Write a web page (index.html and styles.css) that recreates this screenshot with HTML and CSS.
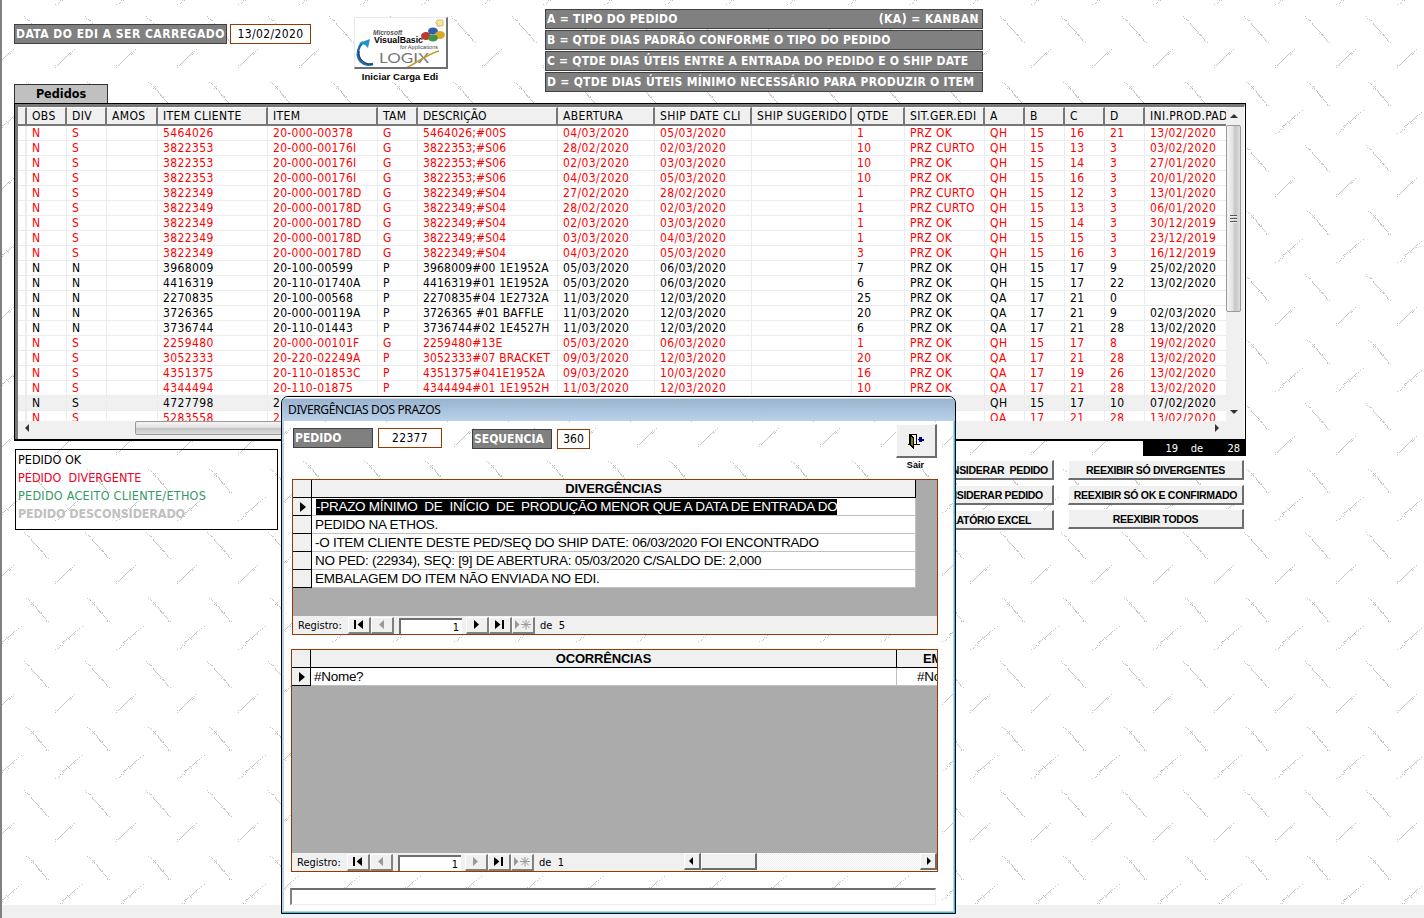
FILE: index.html
```html
<!DOCTYPE html>
<html lang="pt-BR">
<head>
<meta charset="utf-8">
<title>Pedidos EDI</title>
<link rel="stylesheet" href="styles.css">
</head>
<body>
<svg class="texture" aria-hidden="true">
  <defs>
    <path id="back-a" d="M26 .5h1M28 1.5h1M29 2.5h1M31 4.5h1M33 4.5h1M32 5.5h1M33 6.5h1M31 6.5h1M33 7.5h1M35 8.5h1M36 9.5h1M36 10.5h1M37 11.5h1M38 12.5h1M38 13.5h2M39 14.5h1M41 14.5h1M40 15.5h2M42 17.5h1M43 18.5h1M44 19.5h1M45 20.5h1M46 22.5h1M46 23.5h1M48 23.5h1"/>
    <path id="back-b" d="M24 .5h1M25 2.5h1M27 3.5h1M28 4.5h2M31 7.5h1M31 8.5h1M32 9.5h1M33 10.5h1M34 11.5h1M35 12.5h1M36 13.5h1M37 14.5h1M38 15.5h1M39 16.5h1M38 17.5h1M40 18.5h2M41 19.5h2M43 21.5h1M44 22.5h1M45 23.5h1M45 24.5h1M46 25.5h1M48 26.5h1"/>
    <path id="fwd-a" d="M82 .5h1M79 2.5h1M77 4.5h1M75 5.5h1M74 6.5h1M73 7.5h1M74 8.5h1M72 8.5h1M71 9.5h1M70 10.5h1M69 11.5h1M68 12.5h1M67 11.5h1M69 13.5h1M66 13.5h1M65 14.5h1M63 15.5h2M62 16.5h1M63 17.5h1M60 19.5h1M62 19.5h1M59 21.5h1M58 22.5h1M55 23.5h1"/>
    <path id="fwd-b" d="M74 .5h1M72 2.5h1M70 3.5h1M69 4.5h1M71 4.5h1M68 5.5h1M70 5.5h1M67 6.5h1M66 7.5h1M65 8.5h1M64 9.5h1M63 10.5h1M62 11.5h1M61 12.5h1M60 13.5h1M59 14.5h1M58 15.5h1M57 16.5h1M55 16.5h1M55 18.5h1"/>
    <g id="tread" class="dots">
      <use href="#back-a" y="82"/><use href="#back-b" y="16"/>
      <use href="#fwd-a" y="110"/><use href="#fwd-a" x="-61" y="110"/>
      <use href="#fwd-a" y="-19"/><use href="#fwd-a" x="-61" y="-19"/>
      <use href="#fwd-b" y="49"/><use href="#fwd-b" x="-61" y="49"/>
    </g>
    <pattern id="plate" width="61" height="129" patternUnits="userSpaceOnUse"><use href="#tread"/></pattern>
    <pattern id="plate-dialog" x="54" y="-42" width="61" height="129" patternUnits="userSpaceOnUse"><use href="#tread"/></pattern>
  </defs>
  <rect width="100%" height="100%" fill="url(#plate)"/>
</svg>
<main class="page">
  <header class="top">
    <div class="edi">
      <span class="tag t1">DATA DO EDI A SER CARREGADO</span><span class="field f1">13/02/2020</span>
    </div>
    <div class="load">
      <button class="logo">
        <svg width="92" height="52" viewBox="0 0 92 52">
          <path d="M18 46C3 50-2 34 8 24" fill="none" stroke="#1b6fae" stroke-width="2.500"/>
          <path d="M4 25l11-4-2 9-3-3z" fill="#2591d0"/>
          <path d="M18 46C7 47 3 39 4 33" fill="none" stroke="#24457c" stroke-width="1.500"/>
          <ellipse cx="71" cy="18" rx="5" ry="4" fill="#bd3b30"/>
          <ellipse cx="78" cy="13" rx="5" ry="3.500" fill="#2d5fae"/>
          <ellipse cx="85" cy="17" rx="5" ry="4" fill="#d9a928"/>
          <ellipse cx="78" cy="20" rx="5" ry="3.500" fill="#409347"/>
          <path d="M82 2h6v6h-6zM80 4l5 5" fill="#f5e6a4" stroke="#d8c070"/>
          <text x="18" y="17" class="ms">Microsoft</text>
          <text x="19" y="25" class="vb" textLength="49" lengthAdjust="spacingAndGlyphs">VisualBasic</text>
          <text x="45" y="31" class="fa" textLength="38">for Applications</text>
          <text x="24" y="45" class="lx" textLength="50" lengthAdjust="spacingAndGlyphs">LOGIX</text>
          <path d="M84 33C73 36 63 44 51 50" fill="none" stroke="#c99b28" stroke-width="1.500"/>
        </svg>
      </button>
      <span class="caption">Iniciar Carga Edi</span>
    </div>
    <div class="legend">
      <div class="tag"><span class="g1">A = TIPO DO PEDIDO</span><span class="g2">(KA) = KANBAN</span></div>
      <div class="tag"><span class="g3">B = QTDE DIAS PADRÃO CONFORME O TIPO DO PEDIDO</span></div>
      <div class="tag"><span class="g4">C = QTDE DIAS ÚTEIS ENTRE A ENTRADA DO PEDIDO E O SHIP DATE</span></div>
      <div class="tag"><span class="g5">D = QTDE DIAS ÚTEIS MÍNIMO NECESSÁRIO PARA PRODUZIR O ITEM</span></div>
    </div>
  </header>
  <div class="tab">Pedidos</div>
  <section class="panel">
    <div class="listview">
      <div class="viewport">
        <table class="orders">
          <colgroup><col style="width:9px"><col style="width:40px"><col style="width:40px"><col style="width:51px"><col style="width:110px"><col style="width:110px"><col style="width:40px"><col style="width:140px"><col style="width:97px"><col style="width:97px"><col style="width:100px"><col style="width:53px"><col style="width:80px"><col style="width:40px"><col style="width:40px"><col style="width:40px"><col style="width:40px"><col style="width:100px"></colgroup>
          <thead><tr><th><th>OBS<th>DIV<th>AMOS<th>ITEM CLIENTE<th>ITEM<th>TAM<th>DESCRIÇÃO<th>ABERTURA<th>SHIP DATE CLI<th>SHIP SUGERIDO<th>QTDE<th>SIT.GER.EDI<th>A<th>B<th>C<th>D<th>INI.PROD.PAD</tr></thead>
          <tbody>
          <tr class="bad"><td><td>N<td>S<td><td>5464026<td>20-000-00378<td>G<td>5464026;#00S<td>04/03/2020<td>05/03/2020<td><td>1<td>PRZ OK<td>QH<td>15<td>16<td>21<td>13/02/2020
          <tr class="bad"><td><td>N<td>S<td><td>3822353<td>20-000-00176I<td>G<td>3822353;#S06<td>28/02/2020<td>02/03/2020<td><td>10<td>PRZ CURTO<td>QH<td>15<td>13<td>3<td>03/02/2020
          <tr class="bad"><td><td>N<td>S<td><td>3822353<td>20-000-00176I<td>G<td>3822353;#S06<td>02/03/2020<td>03/03/2020<td><td>10<td>PRZ OK<td>QH<td>15<td>14<td>3<td>27/01/2020
          <tr class="bad"><td><td>N<td>S<td><td>3822353<td>20-000-00176I<td>G<td>3822353;#S06<td>04/03/2020<td>05/03/2020<td><td>10<td>PRZ OK<td>QH<td>15<td>16<td>3<td>20/01/2020
          <tr class="bad"><td><td>N<td>S<td><td>3822349<td>20-000-00178D<td>G<td>3822349;#S04<td>27/02/2020<td>28/02/2020<td><td>1<td>PRZ CURTO<td>QH<td>15<td>12<td>3<td>13/01/2020
          <tr class="bad"><td><td>N<td>S<td><td>3822349<td>20-000-00178D<td>G<td>3822349;#S04<td>28/02/2020<td>02/03/2020<td><td>1<td>PRZ CURTO<td>QH<td>15<td>13<td>3<td>06/01/2020
          <tr class="bad"><td><td>N<td>S<td><td>3822349<td>20-000-00178D<td>G<td>3822349;#S04<td>02/03/2020<td>03/03/2020<td><td>1<td>PRZ OK<td>QH<td>15<td>14<td>3<td>30/12/2019
          <tr class="bad"><td><td>N<td>S<td><td>3822349<td>20-000-00178D<td>G<td>3822349;#S04<td>03/03/2020<td>04/03/2020<td><td>1<td>PRZ OK<td>QH<td>15<td>15<td>3<td>23/12/2019
          <tr class="bad"><td><td>N<td>S<td><td>3822349<td>20-000-00178D<td>G<td>3822349;#S04<td>04/03/2020<td>05/03/2020<td><td>3<td>PRZ OK<td>QH<td>15<td>16<td>3<td>16/12/2019
          <tr><td><td>N<td>N<td><td>3968009<td>20-100-00599<td>P<td>3968009#00 1E1952A<td>05/03/2020<td>06/03/2020<td><td>7<td>PRZ OK<td>QH<td>15<td>17<td>9<td>25/02/2020
          <tr><td><td>N<td>N<td><td>4416319<td>20-110-01740A<td>P<td>4416319#01 1E1952A<td>05/03/2020<td>06/03/2020<td><td>6<td>PRZ OK<td>QH<td>15<td>17<td>22<td>13/02/2020
          <tr><td><td>N<td>N<td><td>2270835<td>20-100-00568<td>P<td>2270835#04 1E2732A<td>11/03/2020<td>12/03/2020<td><td>25<td>PRZ OK<td>QA<td>17<td>21<td>0<td>
          <tr><td><td>N<td>N<td><td>3726365<td>20-000-00119A<td>P<td>3726365 #01 BAFFLE<td>11/03/2020<td>12/03/2020<td><td>20<td>PRZ OK<td>QA<td>17<td>21<td>9<td>02/03/2020
          <tr><td><td>N<td>N<td><td>3736744<td>20-110-01443<td>P<td>3736744#02 1E4527H<td>11/03/2020<td>12/03/2020<td><td>6<td>PRZ OK<td>QA<td>17<td>21<td>28<td>13/02/2020
          <tr class="bad"><td><td>N<td>S<td><td>2259480<td>20-000-00101F<td>G<td>2259480#13E<td>05/03/2020<td>06/03/2020<td><td>1<td>PRZ OK<td>QH<td>15<td>17<td>8<td>19/02/2020
          <tr class="bad"><td><td>N<td>S<td><td>3052333<td>20-220-02249A<td>P<td>3052333#07 BRACKET<td>09/03/2020<td>12/03/2020<td><td>20<td>PRZ OK<td>QA<td>17<td>21<td>28<td>13/02/2020
          <tr class="bad"><td><td>N<td>S<td><td>4351375<td>20-110-01853C<td>P<td>4351375#041E1952A<td>09/03/2020<td>10/03/2020<td><td>16<td>PRZ OK<td>QA<td>17<td>19<td>26<td>13/02/2020
          <tr class="bad"><td><td>N<td>S<td><td>4344494<td>20-110-01875<td>P<td>4344494#01 1E1952H<td>11/03/2020<td>12/03/2020<td><td>10<td>PRZ OK<td>QA<td>17<td>21<td>28<td>13/02/2020
          <tr class="current"><td><td>N<td>S<td><td>4727798<td>2<td><td><td><td><td><td><td><td>QH<td>15<td>17<td>10<td>07/02/2020
          <tr class="bad"><td><td>N<td>S<td><td>5283558<td>2<td><td><td><td><td><td><td><td>QA<td>17<td>21<td>28<td>13/02/2020
          </tbody>
        </table>
      </div>
      <div class="vscroll"><i class="tri up"></i><div class="vthumb"><i></i><i></i><i></i></div><i class="tri down"></i></div>
      <div class="hscroll"><i class="tri go-left"></i><div class="hthumb"></div><i class="tri go-right"></i></div>
    </div>
  </section>
  <section class="bottom">
    <div class="status">
      <div>PEDIDO OK</div>
      <div class="s-red">PEDIDO&nbsp; DIVERGENTE</div>
      <div class="s-green">PEDIDO ACEITO CLIENTE/ETHOS</div>
      <div class="s-gray">PEDIDO DESCONSIDERADO</div>
    </div>
    <div class="actions a1">
      <button class="btn">DESCONSIDERAR&nbsp; PEDIDO</button>
      <button class="btn b2">CONSIDERAR PEDIDO</button>
      <button class="btn b3">RELATÓRIO EXCEL</button>
    </div>
    <div class="side">
      <div class="counter"><span>19</span><span>de</span><span>28</span></div>
      <div class="actions a2">
        <button class="btn">REEXIBIR SÓ DIVERGENTES</button>
        <button class="btn">REEXIBIR SÓ OK E CONFIRMADO</button>
        <button class="btn b4">REEXIBIR TODOS</button>
      </div>
    </div>
  </section>
</main>
<div class="footer-strip"></div>

<section class="dialog">
  <h1 class="title"><span>DIVERGÊNCIAS DOS PRAZOS</span></h1>
  <div class="content">
    <svg class="texture" aria-hidden="true"><rect width="100%" height="100%" fill="url(#plate-dialog)"/></svg>
    <div class="keys">
      <span class="tag k1"><span>PEDIDO</span></span><span class="field k2">22377</span>
      <span class="tag k3"><span>SEQUENCIA</span></span><span class="field k4">360</span>
      <div class="exit">
        <button class="exit-btn">
          <svg width="18" height="16" viewBox="0 0 18 16" shape-rendering="crispEdges">
            <path d="M1 11.500h2M7 11.500h6M2.500 11V1M2 1.500h7M9.500 1v10" fill="none" stroke="#000"/>
            <path d="M3.500 2l3 3v10l-3-3z" fill="#808000" stroke="#000"/>
            <path d="M11 6.500l3-3v2h3v2h-3v2zM12 4h3v5h-3z" fill="#000080"/>
          </svg>
        </button>
        <span class="caption">Sair</span>
      </div>
    </div>
    <div class="sheet s1">
      <div class="grid g-div">
        <div class="rs hd"></div><div class="ch">DIVERGÊNCIAS</div>
        <div class="rs"><i class="cur"></i></div><div class="cell"><mark class="l1">-PRAZO MÍNIMO&nbsp; DE&nbsp; INÍCIO&nbsp; DE&nbsp; PRODUÇÃO MENOR QUE A DATA DE ENTRADA DO</mark></div>
        <div class="rs"></div><div class="cell"><span>PEDIDO NA ETHOS.</span></div>
        <div class="rs"></div><div class="cell"><span class="l3">-O ITEM CLIENTE DESTE PED/SEQ DO SHIP DATE: 06/03/2020 FOI ENCONTRADO</span></div>
        <div class="rs"></div><div class="cell"><span class="l4">NO PED: (22934), SEQ: [9] DE ABERTURA: 05/03/2020 C/SALDO DE: 2,000</span></div>
        <div class="rs"></div><div class="cell"><span>EMBALAGEM DO ITEM NÃO ENVIADA NO EDI.</span></div>
      </div>
      <div class="nav">
        <span class="reg">Registro:</span>
        <b class="nb"><svg viewBox="0 0 22 16"><path d="M6 3h2v9H6zM15 3v9L9.500 7.500z"/></svg></b>
        <b class="nb off"><svg viewBox="0 0 22 16"><path d="M13 3v9L8 7.500z"/></svg></b>
        <span class="pos">1</span>
        <b class="nb"><svg viewBox="0 0 22 16"><path d="M8 3v9l5-4.500z"/></svg></b>
        <b class="nb"><svg viewBox="0 0 22 16"><path d="M6 3v9l5.500-4.500zM13 3h2v9h-2z"/></svg></b>
        <b class="nb off"><svg viewBox="0 0 22 16"><path d="M3 3v9l4.500-4.500z"/><path class="star" d="M9 7.500h10M14 3v9.500M10.500 4l7 7M17.500 4l-7 7"/></svg></b>
        <span class="of">de&nbsp; 5</span>
      </div>
    </div>
    <div class="sheet s2">
      <div class="grid g-oc">
        <div class="rs hd"></div><div class="ch">OCORRÊNCIAS</div><div class="ch em">EM</div>
        <div class="rs"><i class="cur"></i></div><div class="cell">#Nome?</div><div class="cell nm">#Nome?</div>
      </div>
      <div class="nav">
        <span class="reg">Registro:</span>
        <b class="nb"><svg viewBox="0 0 22 16"><path d="M6 3h2v9H6zM15 3v9L9.500 7.500z"/></svg></b>
        <b class="nb off"><svg viewBox="0 0 22 16"><path d="M13 3v9L8 7.500z"/></svg></b>
        <span class="pos">1</span>
        <b class="nb off"><svg viewBox="0 0 22 16"><path d="M8 3v9l5-4.500z"/></svg></b>
        <b class="nb"><svg viewBox="0 0 22 16"><path d="M6 3v9l5.500-4.500zM13 3h2v9h-2z"/></svg></b>
        <b class="nb off"><svg viewBox="0 0 22 16"><path d="M3 3v9l4.500-4.500z"/><path class="star" d="M9 7.500h10M14 3v9.500M10.500 4l7 7M17.500 4l-7 7"/></svg></b>
        <span class="of">de&nbsp; 1</span>
        <div class="classic"><b class="sb"><svg viewBox="0 0 16 16"><path d="M9 4v8L5 8z"/></svg></b><b class="st"></b><b class="sb end"><svg viewBox="0 0 16 16"><path d="M7 4v8l4-4z"/></svg></b></div>
      </div>
    </div>
    <div class="message"></div>
  </div>
</section>
</body>
</html>
```
FILE: styles.css
```css
* { box-sizing: border-box; }
html, body { margin: 0; height: 918px; overflow: hidden; background: #fff; }
body { position: relative; border-left: 2px solid #808080; font: 12px "DejaVu Sans Condensed", "DejaVu Sans", sans-serif; font-stretch: condensed; color: #000; white-space: nowrap; }
button { font: inherit; color: inherit; padding: 0; white-space: nowrap; }
.texture { position: absolute; left: 0; top: 0; width: 100%; height: 100%; }
body > .texture { left: -2px; width: 1424px; }
.dots { fill: none; stroke: #c6c6c6; stroke-width: 1; shape-rendering: crispEdges; }
.page { position: relative; height: 905px; padding: 0 0 0 12px; }
.footer-strip { position: relative; height: 13px; background: #f0f0f0; }

.tag { display: block; height: 20px; border: 1px solid #404040; background: #808080; color: #fff; font-weight: bold; font-size: 12px; line-height: 18px; padding-left: 1px; }
.field { display: block; height: 20px; border: 1px solid #953a00; background: #fff; line-height: 18px; text-align: center; }
.top { display: flex; height: 84px; }
.edi { display: flex; gap: 3px; padding-top: 24px; width: 340px; }
.t1 { width: 213px; letter-spacing: .48px; }
.f1 { width: 81px; letter-spacing: .4px; }
.load { width: 94px; padding-top: 17px; display: flex; flex-direction: column; align-items: center; }
.logo { width: 94px; height: 54px; background: #fff; border: 1px solid #e8e8e8; border-right: 2px solid #707070; border-bottom: 2px solid #707070; overflow: hidden; }
.logo svg { display: block; }
.ms { font: italic bold 6.500px "Liberation Sans"; fill: #555; }
.vb { font: bold 9px "Liberation Sans"; }
.fa { font: 5.500px "Liberation Sans"; fill: #444; }
.lx { font: 14px "Lato", sans-serif; fill: #777; }
.caption { font: bold 9.500px/16px "Liberation Sans", Arial, sans-serif; letter-spacing: .1px; }
.load .caption { margin: 0 0 0 -2px; padding-top: 0; line-height: 15px; }
.legend { width: 438px; margin-left: 97px; padding-top: 9px; display: flex; flex-direction: column; gap: 1px; }
.legend .tag { display: flex; justify-content: space-between; padding-right: 3px; }
.g1 { letter-spacing: .3px; }
.g2 { letter-spacing: .45px; }
.g3, .g4 { letter-spacing: .2px; }
.g5 { letter-spacing: .28px; }

.tab { width: 94px; height: 19px; border: 1px solid #333; border-bottom: 0; background: #c0c0c0; text-align: center; font-weight: bold; font-size: 12.500px; line-height: 17px; }
.panel { width: 1232px; height: 338px; border: 1px solid #000; border-bottom-width: 2px; background: #f0f0f0; }
.listview { height: 335px; border-top: 3px solid #777; border-left: 3px solid #777; border-right: 1px solid #fff; display: grid; grid-template: 314px 17px / 1208px 15px; }
.viewport { overflow: hidden; background: #fff; }
.orders { width: 1227px; table-layout: fixed; border-collapse: separate; border-spacing: 0; }
.orders th { height: 19px; padding: 1px 0 0 5px; background: #f0f0f0; border-right: 2px solid #777; border-bottom: 2px solid #777; border-top: 1px solid #fff; text-align: left; font-weight: normal; line-height: 15px; letter-spacing: .35px; overflow: visible; }
.orders th:nth-child(8) { letter-spacing: 0; }
.orders td { height: 15px; padding: 1px 0 0 5px; border-right: 1px solid #ececec; border-bottom: 1px solid #ececec; line-height: 13px; letter-spacing: .4px; }
.orders td:nth-child(8) { letter-spacing: .17px; }
.orders td:nth-child(6), .orders td:nth-child(13) { letter-spacing: .3px; }
.orders tr > :nth-child(1) { border-right-width: 2px; }
.bad { color: #f00; }
.current td { background: #f0f0f0; }
.vscroll { display: flex; flex-direction: column; align-items: center; background: #f0f0f0; }
.tri { border: 4px solid transparent; width: 0; height: 0; flex: none; }
.up { border-bottom-color: #333; margin: 3px 0 7px; }
.down { border-top-color: #333; margin-top: 98px; }
.go-left { border-right-color: #333; margin: 0 106px 0 3px; }
.go-right { border-left-color: #333; margin-left: auto; }
.vthumb { width: 15px; height: 187px; border: 1px solid #999; border-radius: 2px; background: linear-gradient(90deg, #f5f5f5, #e2e2e2 45%, #c5c5c5 60%, #ddd); display: flex; flex-direction: column; justify-content: center; align-items: center; gap: 1px; }
.vthumb i { width: 7px; height: 2px; background: #555; border-bottom: 1px solid #eee; }
.hscroll { display: flex; align-items: center; background: #f0f0f0; padding: 0 3px 3px 0; }
.hthumb { width: 530px; height: 14px; flex: none; border: 1px solid #999; border-radius: 2px; background: linear-gradient(#f5f5f5, #e2e2e2 45%, #c5c5c5 55%, #ddd); }

.bottom { display: flex; }
.status { width: 263px; height: 81px; margin: 8px 0 0 1px; border: 1px solid #000; padding: 1px 0 0 2px; line-height: 18px; font-size: 12.500px; }
.s-red { color: #f00026; }
.s-green { color: #339966; letter-spacing: .26px; }
.s-gray { color: #c0c0c0; font-weight: bold; letter-spacing: -.15px; }
.actions { display: flex; flex-direction: column; gap: 5px; }
.a1 { width: 176px; margin: 19px 0 0 600px; }
.btn { height: 20px; background: #f0f0f0; border: 1px solid #fff; border-right: 2px solid #6d6d6d; border-bottom: 2px solid #6d6d6d; font: bold 10.500px "Liberation Sans", Arial, sans-serif; letter-spacing: -.3px; text-align: center; }
.a1 .btn { text-align: right; padding-right: 4px; }
.a1 .b2 { padding-right: 9px; }
.a1 .b3 { padding-right: 21px; }
.side { width: 192px; }
.counter { width: 103px; height: 15px; margin-left: 89px; background: #000; color: #fff; font-size: 11px; line-height: 15px; display: grid; grid-template-columns: 35px 25px 37px; text-align: right; }
.a2 { width: 176px; margin: 4px 0 0 14px; }
.a2 .b4 { margin-top: -1px; }

.dialog { position: absolute; left: 279px; top: 396px; width: 675px; height: 518px; border: 1px solid #000; border-radius: 7px 7px 0 0; background: #b9d1ea; overflow: hidden; box-shadow: inset -1px -1px #26c6e8; padding: 0 2px 2px 2px; }
.title { margin: 0 -2px; height: 24px; padding-left: 6px; background: linear-gradient(#fff 0 1px, #9ab4cf 2px, #b9d1ea); font: 12px/25px "Noto Sans", sans-serif; letter-spacing: -.36px; }
.content { position: relative; height: 490px; background: #fff; padding: 7px 0 0 9px; overflow: hidden; }
.content > :not(.texture) { position: relative; }
.keys { display: flex; align-items: flex-start; height: 51px; }
.k1 { width: 80px; margin-right: 5px; }
.k2 { width: 64px; margin-right: 30px; letter-spacing: .3px; }
.k3 { width: 80px; margin: 1px 5px 0 0; }
.k4 { width: 33px; margin-top: 1px; }
.exit { width: 41px; margin: -4px 0 0 306px; display: flex; flex-direction: column; align-items: center; }
.exit-btn { width: 41px; height: 34px; flex: none; background: #f0f0f0; border: 1px solid #fff; border-right: 2px solid #6d6d6d; border-bottom: 2px solid #6d6d6d; }
.exit-btn svg { display: block; margin: 0 auto; }
.exit .caption { font-size: 9px; line-height: 14px; padding-right: 2px; }
.sheet { border: 1px solid #953a00; background: #ababab; display: flex; flex-direction: column; justify-content: space-between; overflow: hidden; font: 13.500px "Liberation Sans", Arial, sans-serif; letter-spacing: -.28px; }
.s1 { width: 646px; height: 156px; margin-left: -1px; }
.s2 { width: 647px; height: 223px; margin: 14px 0 0 -2px; }
.grid { display: grid; grid-auto-rows: 18px; }
.g-div { grid-template-columns: 19px 604px; }
.g-oc { grid-template-columns: 19px 586px 60px; }
.rs { background: #f0f0f0; border-right: 1px solid #000; border-bottom: 1px solid #000; display: flex; align-items: center; justify-content: center; }
.ch { background: #f0f0f0; border-right: 1px solid #000; border-bottom: 1px solid #000; font-weight: bold; font-size: 13px; letter-spacing: -.2px; text-align: center; line-height: 18px; }
.cell { background: #fff; border-right: 1px solid #c0c0c0; border-bottom: 1px solid #c0c0c0; padding-left: 3px; line-height: 18px; }
.cell mark { background: #000; color: #fff; display: inline-block; height: 16px; line-height: 16px; margin-left: 1px; }
.cur { border: 5px solid transparent; border-left: 6px solid #000; border-right: 0; margin-left: 2px; }
.ch.em { text-align: left; padding-left: 26px; }
.nm { padding-left: 20px; }
.nav { display: flex; height: 18px; background: #f0f0f0; font: 11px/20px "DejaVu Sans Condensed", "DejaVu Sans", sans-serif; font-stretch: condensed; letter-spacing: 0; padding-left: 5px; }
.reg { width: 50px; }
.nb { width: 23px; height: 17px; flex: none; margin-top: 1px; border: 1px solid #fff; border-right: 2px solid #808080; border-bottom: 2px solid #808080; }
.nb svg, .sb svg { display: block; width: 22px; height: 16px; margin: -1px; fill: #000; }
.nb.off svg { fill: #999; }
.star { stroke: #999; fill: none; }
.pos { width: 63px; height: 16px; margin: 2px 4px 0 5px; background: #fff; border-top: 2px solid #6d6d6d; border-left: 2px solid #6d6d6d; text-align: right; padding-right: 3px; line-height: 16px; }
.of { margin-left: 5px; }
.classic { margin-left: auto; width: 253px; display: flex; background: repeating-conic-gradient(#eee 0 25%, #fff 0 50%) 0 0 / 2px 2px; }
.sb { width: 17px; height: 17px; background: #f0f0f0; border: 1px solid #fff; border-right: 2px solid #6d6d6d; border-bottom: 2px solid #6d6d6d; }
.sb svg { width: 16px; }
.st { width: 56px; height: 17px; background: #f0f0f0; border: 1px solid #fff; border-right: 2px solid #6d6d6d; border-bottom: 2px solid #6d6d6d; }
.end { margin-left: auto; }
.message { width: 646px; height: 17px; margin: 16px 0 0 -3px; border: 1px solid #eee; border-top: 2px solid #6d6d6d; border-left: 2px solid #808080; background: #fff; }
```
